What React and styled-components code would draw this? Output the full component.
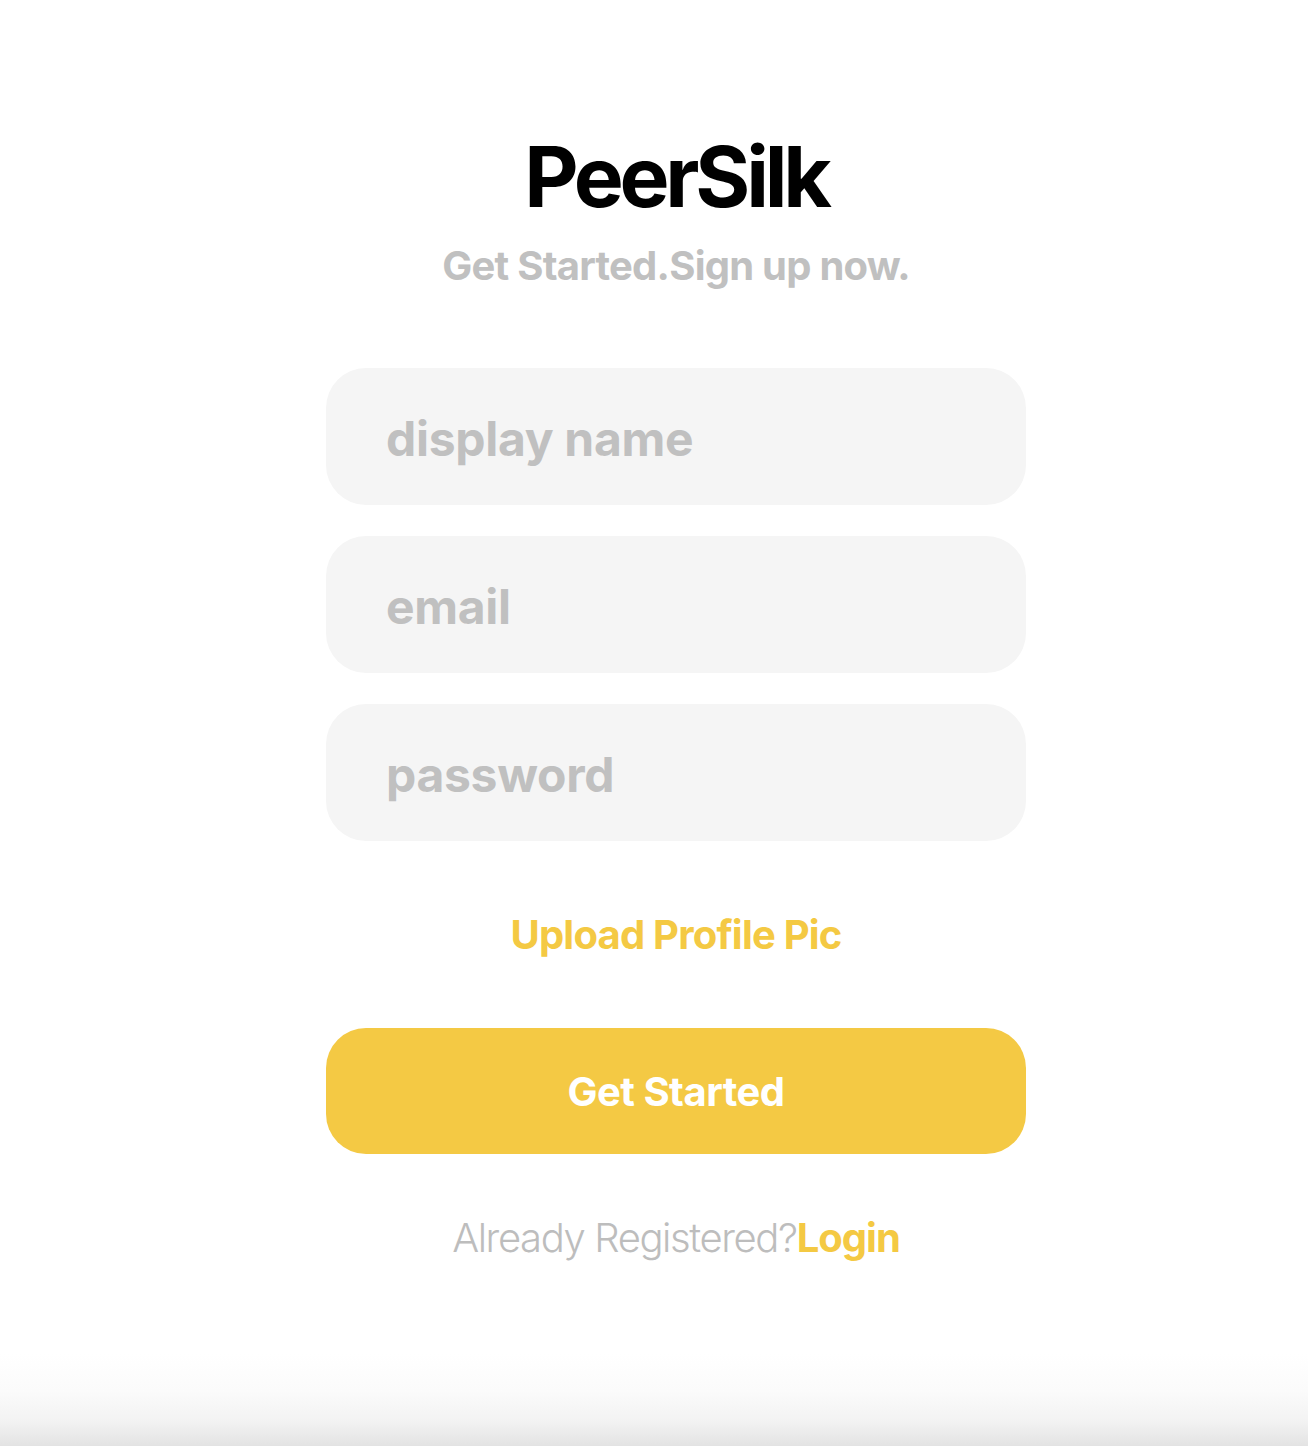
import React from 'react'
import styled, { createGlobalStyle } from 'styled-components'

const GlobalStyle = createGlobalStyle`
  html, body {
    margin: 0;
    padding: 0;
  }
  body {
    font-family: Inter, "Noto Sans", sans-serif;
    background: #fff;
  }
`

const Page = styled.div`
  box-sizing: border-box;
  min-height: 100vh;
  padding-left: 44px;
  display: flex;
  flex-direction: column;
  align-items: center;
  background: linear-gradient(
    to bottom,
    #ffffff 0,
    #ffffff calc(100% - 92px),
    #fbfbfb calc(100% - 55px),
    #f3f3f3 calc(100% - 26px),
    #e3e3e3 100%
  );
`

const Container = styled.div`
  width: 700px;
  display: flex;
  flex-direction: column;
  align-items: center;
  padding-top: 135px;
`

const Title = styled.h1`
  margin: 0;
  font-size: 84px;
  line-height: 84px;
  font-weight: 700;
  color: #000;
  letter-spacing: -4.2px;
`

const Subtitle = styled.p`
  margin: 27px 0 0;
  font-size: 40px;
  line-height: 40px;
  font-weight: 700;
  color: #c0c0c0;
  letter-spacing: -0.75px;
`

const Form = styled.form`
  width: 100%;
  margin-top: 82px;
  display: flex;
  flex-direction: column;
  gap: 31px;
`

const Input = styled.input`
  box-sizing: border-box;
  width: 100%;
  height: 137px;
  border: none;
  outline: none;
  border-radius: 40px;
  background: #f5f5f5;
  padding: 4px 60px 0;
  font-family: inherit;
  font-size: 48px;
  font-weight: 700;
  letter-spacing: -0.3px;
  color: #333;

  &::placeholder {
    color: #c0c0c0;
  }
`

const UploadLabel = styled.label`
  align-self: center;
  margin-top: 43px;
  font-size: 40px;
  line-height: 40px;
  font-weight: 700;
  letter-spacing: -0.8px;
  color: #f4c943;
  cursor: pointer;

  input {
    display: none;
  }
`

const SubmitButton = styled.button`
  margin-top: 42px;
  width: 100%;
  height: 126px;
  border: none;
  border-radius: 40px;
  background: #f4c944;
  color: #fff;
  font-family: inherit;
  font-size: 40px;
  font-weight: 700;
  letter-spacing: -0.5px;
  cursor: pointer;
`

const Footer = styled.p`
  margin: 64px 0 0;
  font-size: 40px;
  line-height: 40px;
  font-weight: 300;
  letter-spacing: -1.4px;
  color: #bdbdbd;

  a {
    color: #f4c943;
    font-weight: 700;
    letter-spacing: -1px;
    text-decoration: none;
  }
`

export default function App() {
  return (
    <>
      <GlobalStyle />
      <Page>
        <Container>
          <Title>PeerSilk</Title>
          <Subtitle>Get Started.Sign up now.</Subtitle>
          <Form onSubmit={e => e.preventDefault()}>
            <Input type="text" placeholder="display name" />
            <Input type="email" placeholder="email" />
            <Input type="password" placeholder="password" />
            <UploadLabel>
              <input type="file" />
              Upload Profile Pic
            </UploadLabel>
            <SubmitButton type="submit">Get Started</SubmitButton>
          </Form>
          <Footer>
            Already Registered?<a href="#">Login</a>
          </Footer>
        </Container>
      </Page>
    </>
  )
}
